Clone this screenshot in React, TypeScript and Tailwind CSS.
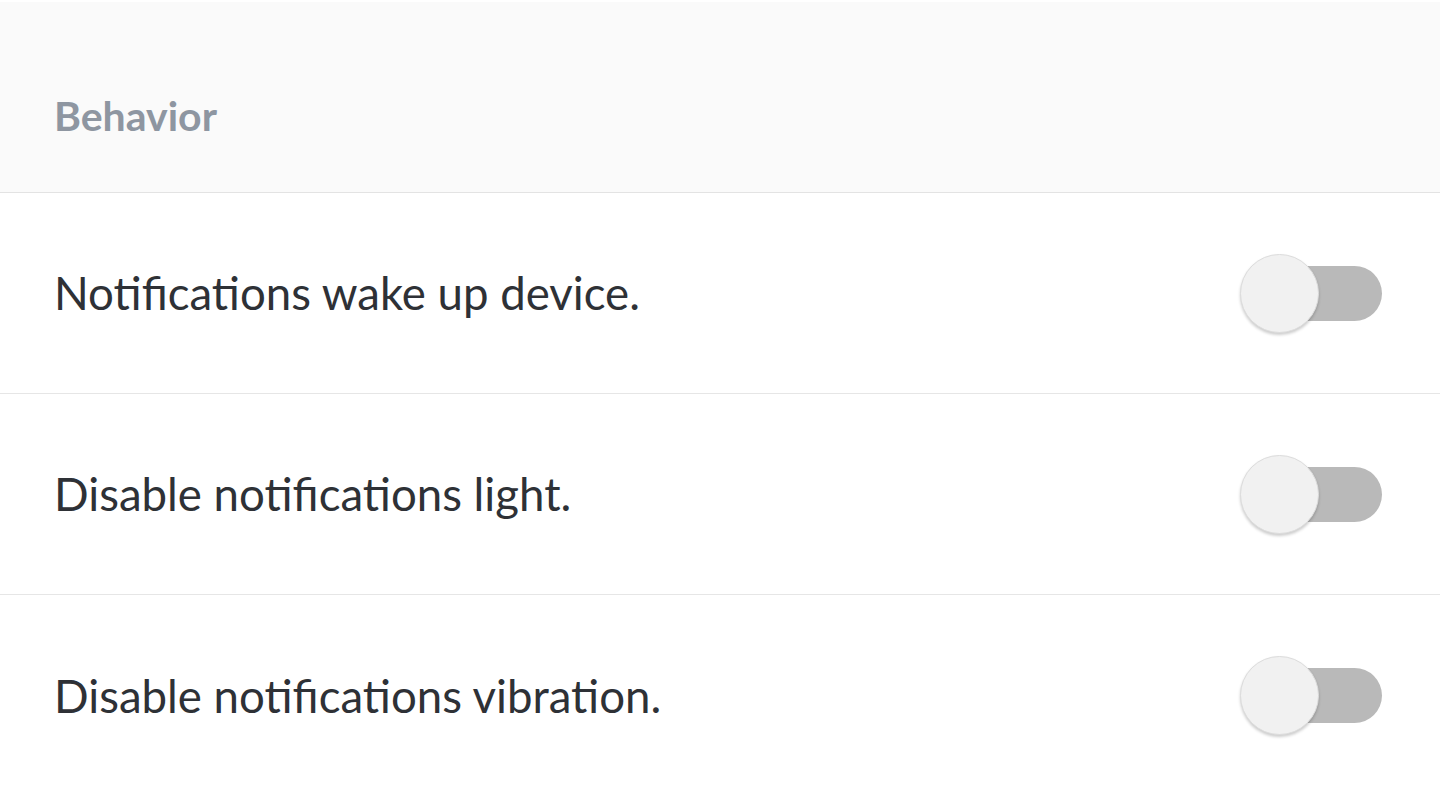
import React from "react";

const settings = [
  "Notifications wake up device.",
  "Disable notifications light.",
  "Disable notifications vibration.",
];

const Toggle = () => {
  return (
    <div className="relative w-[142px] h-[80px] flex items-center">
      <div className="absolute right-0 w-[132px] h-[55px] rounded-full bg-[#b9b9b9]" />
      <div className="absolute left-0 w-[79px] h-[79px] rounded-full bg-[#f1f1f1] border border-[#dcdcdc] shadow-[0_2px_3px_rgba(0,0,0,0.2)]" />
    </div>
  );
};

const App = () => {
  return (
    <main
      className="w-[1440px] h-[795px] bg-white overflow-hidden"
      style={{ fontFamily: "Lato, 'Noto Sans', sans-serif" }}
    >
      <div className="h-[193px] bg-[#fafafa] border-t-2 border-white border-b border-b-[#e3e3e3] flex items-center pl-[54px] pt-[36px]">
        <h2 className="text-[41px] font-bold text-[#8e96a1] leading-none">Behavior</h2>
      </div>
      {settings.map((label, i) => (
        <div
          key={label}
          className={`h-[201px] flex items-center justify-between pl-[54px] pr-[58px] ${
            i < settings.length - 1 ? "border-b border-[#e6e6e6]" : ""
          }`}
        >
          <span className="text-[45.6px] text-[#2e3136] leading-none">{label}</span>
          <Toggle />
        </div>
      ))}
    </main>
  );
};

export default App;
